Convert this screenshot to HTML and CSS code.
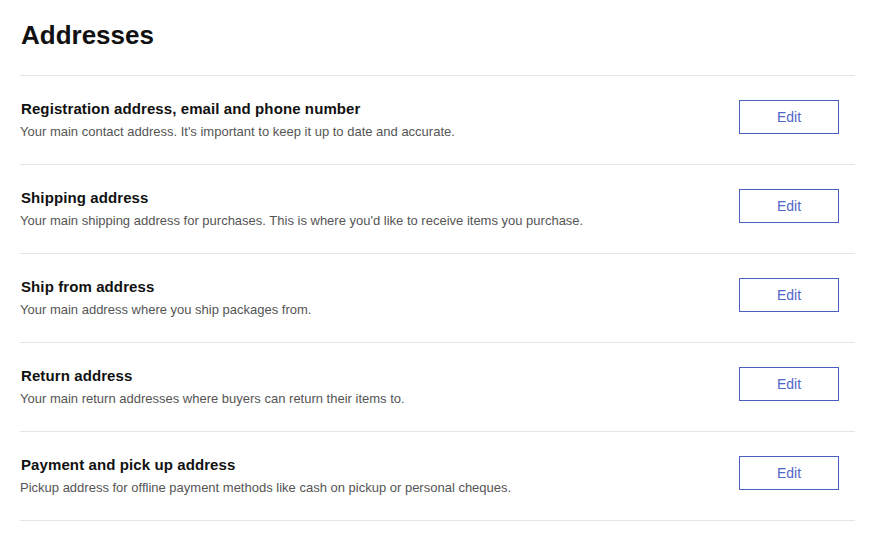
FILE: index.html
```html
<!DOCTYPE html>
<html>
<head>
<meta charset="utf-8">
<link rel="stylesheet" href="styles.css">
</head>
<body>
<main class="page">
  <h1 class="page-title">Addresses</h1>
  <ul class="address-list">
    <li class="address-row">
      <div class="address-text">
        <h2 class="address-title">Registration address, email and phone number</h2>
        <p class="address-desc">Your main contact address. It's important to keep it up to date and accurate.</p>
      </div>
      <button class="edit-btn">Edit</button>
    </li>
    <li class="address-row">
      <div class="address-text">
        <h2 class="address-title">Shipping address</h2>
        <p class="address-desc">Your main shipping address for purchases. This is where you'd like to receive items you purchase.</p>
      </div>
      <button class="edit-btn">Edit</button>
    </li>
    <li class="address-row">
      <div class="address-text">
        <h2 class="address-title">Ship from address</h2>
        <p class="address-desc">Your main address where you ship packages from.</p>
      </div>
      <button class="edit-btn">Edit</button>
    </li>
    <li class="address-row">
      <div class="address-text">
        <h2 class="address-title">Return address</h2>
        <p class="address-desc">Your main return addresses where buyers can return their items to.</p>
      </div>
      <button class="edit-btn">Edit</button>
    </li>
    <li class="address-row">
      <div class="address-text">
        <h2 class="address-title">Payment and pick up address</h2>
        <p class="address-desc">Pickup address for offline payment methods like cash on pickup or personal cheques.</p>
      </div>
      <button class="edit-btn">Edit</button>
    </li>
  </ul>
</main>
</body>
</html>
```

FILE: styles.css
```css
html, body {
  margin: 0;
  padding: 0;
  background: #ffffff;
}
body {
  font-family: "Liberation Sans", Arial, sans-serif;
  color: #111111;
}
.page {
  padding: 18px 19px 0 20px;
}
.page-title {
  margin: 0;
  padding-left: 1px;
  font-size: 26px;
  line-height: 34px;
  font-weight: 700;
  color: #111111;
  height: 57px;
}
.address-list {
  list-style: none;
  margin: 0;
  padding: 0;
  border-top: 1px solid #e5e5e5;
}
.address-row {
  display: flex;
  align-items: center;
  justify-content: space-between;
  height: 88px;
  border-bottom: 1px solid #e5e5e5;
  padding-right: 16px;
}
.address-text {
  padding-bottom: 1px;
}
.address-title {
  margin: 0;
  padding-left: 1px;
  font-size: 15px;
  line-height: 20px;
  font-weight: 700;
  letter-spacing: 0.1px;
  color: #111111;
}
.address-desc {
  margin: 4px 0 0;
  font-size: 13px;
  line-height: 18px;
  color: #555555;
}
.edit-btn {
  width: 100px;
  height: 34px;
  margin-top: -6px;
  background: #ffffff;
  border: 1px solid #4a5fc1;
  color: #5066c8;
  font-family: "Liberation Sans", Arial, sans-serif;
  font-size: 14px;
  padding: 0;
  cursor: pointer;
}
```
